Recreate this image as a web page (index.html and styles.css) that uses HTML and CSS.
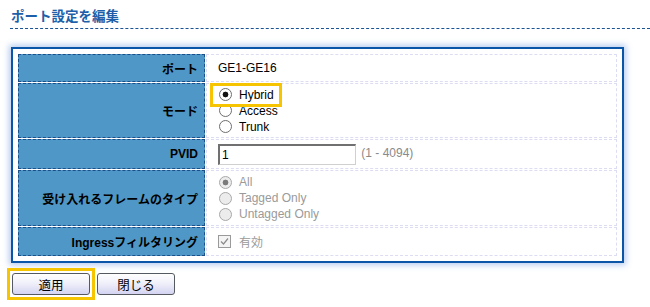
FILE: index.html
```html
<!DOCTYPE html>
<html lang="ja">
<head>
    <meta charset="UTF-8">
    <title>ポート設定を編集</title>
    <link rel="stylesheet" href="styles.css">
</head>
<body>
    <h1 class="page-title">ポート設定を編集</h1>

    <div class="panel">
        <table class="form-table">
            <tr class="row-port">
                <th>ポート</th>
                <td>GE1-GE16</td>
            </tr>
            <tr class="row-mode">
                <th>モード</th>
                <td>
                    <label class="opt highlight"><input type="radio" name="mode" checked> Hybrid</label>
                    <label class="opt"><input type="radio" name="mode"> Access</label>
                    <label class="opt"><input type="radio" name="mode"> Trunk</label>
                </td>
            </tr>
            <tr class="row-pvid">
                <th>PVID</th>
                <td>
                    <input class="text-input" type="text" value="1">
                    <span class="hint">(1 - 4094)</span>
                </td>
            </tr>
            <tr class="row-frame">
                <th>受け入れるフレームのタイプ</th>
                <td class="disabled">
                    <label class="opt"><input type="radio" name="frame" checked disabled> All</label>
                    <label class="opt"><input type="radio" name="frame" disabled> Tagged Only</label>
                    <label class="opt"><input type="radio" name="frame" disabled> Untagged Only</label>
                </td>
            </tr>
            <tr class="row-ingress">
                <th>Ingressフィルタリング</th>
                <td class="disabled">
                    <label class="opt">
                        <span class="check-box">
                            <svg width="11" height="11" viewBox="0 0 11 11"><path d="M2 5.5 L4.5 8 L9 2.5" fill="none" stroke="#8c8c8c" stroke-width="1.2"/></svg>
                        </span>
                        有効
                    </label>
                </td>
            </tr>
        </table>
    </div>

    <div class="actions">
        <span class="btn-wrap"><button class="btn">適用</button></span>
        <button class="btn">閉じる</button>
    </div>
</body>
</html>
```

FILE: styles.css
```css
body {
    margin: 0;
    padding: 8px 0 0 10px;
    font-family: "Liberation Sans", Arial, "Noto Sans CJK JP", sans-serif;
    font-size: 12px;
    color: #000;
    background: #fff;
}

.page-title {
    margin: 0;
    padding: 0 0 3px 1px;
    font-size: 13.5px;
    font-weight: bold;
    color: #1d5fa8;
    border-bottom: 1px dashed #1a5296;
    line-height: 17px;
}

.panel {
    margin: 18px 0 0 1px;
    width: 599px;
    padding: 5px;
    border: 2px solid #0a55a8;
    box-shadow: 0 0 6px 2px rgba(90, 140, 220, 0.45);
}

.form-table {
    width: calc(100% + 2px);
    border-collapse: separate;
    border-spacing: 1px;
    margin: -1px;
}

.form-table th {
    width: 175px;
    padding: 0 6px 0 4px;
    text-align: right;
    background: #4f97c6;
    border: 1px dashed #1a4f8a;
    font-weight: bold;
    color: #000;
}

.form-table td {
    padding: 0 0 0 11px;
    border: 1px dashed #dcdcf2;
    vertical-align: middle;
}

.row-port td {
    height: 26px;
}

.row-mode td {
    height: 53px;
}

.row-pvid td {
    height: 28px;
}

.row-frame td {
    height: 54px;
}

.row-ingress td {
    height: 27px;
}

.opt {
    display: flex;
    align-items: center;
    height: 16px;
    width: fit-content;
}

.opt.highlight {
    margin-left: -4px;
    padding: 0 4px 0 4px;
    outline: 3px solid #f6c400;
    outline-offset: 1px;
}

.opt input {
    appearance: none;
    margin: 0 7px 0 1px;
    width: 13px;
    height: 13px;
    border: 1px solid #6e6e6e;
    border-radius: 50%;
    background: #fff;
    flex: none;
}

.opt input:checked {
    background: radial-gradient(circle, #111 0 2.6px, #fff 3.2px);
}

.opt input:disabled {
    border-color: #a8a8a8;
    background: #ececec;
}

.opt input:disabled:checked {
    background: radial-gradient(circle, #7a7a7a 0 2.6px, #ececec 3.2px);
}

.check-box {
    display: flex;
    align-items: center;
    justify-content: center;
    width: 11px;
    height: 11px;
    margin: 0 8px 0 0;
    border: 1px solid #9a9a9a;
    background: #f4f4f4;
    flex: none;
}

.disabled {
    color: #9a9a9a;
}

.text-input {
    width: 131px;
    height: 16px;
    padding: 1px 2px;
    border: 1px solid #d0d0d0;
    border-top: 2px solid #707070;
    border-left: 2px solid #707070;
    font-family: inherit;
    font-size: 12px;
    vertical-align: middle;
}

.hint {
    color: #8a8a8a;
    margin-left: 2px;
}

.actions {
    display: flex;
    align-items: center;
    gap: 2px;
    margin: 5px 0 0 -3px;
}

.btn-wrap {
    display: flex;
    padding: 2px;
    border: 3px solid #f6c400;
}

.btn {
    width: 78px;
    height: 22px;
    border: 1px solid #555a60;
    border-radius: 3px;
    background: linear-gradient(#ffffff, #f0f0fa 45%, #d4d4f2);
    font-family: "Liberation Sans", Arial, "Noto Sans CJK JP", sans-serif;
    font-size: 12.5px;
    color: #000;
    padding: 0;
}
```
